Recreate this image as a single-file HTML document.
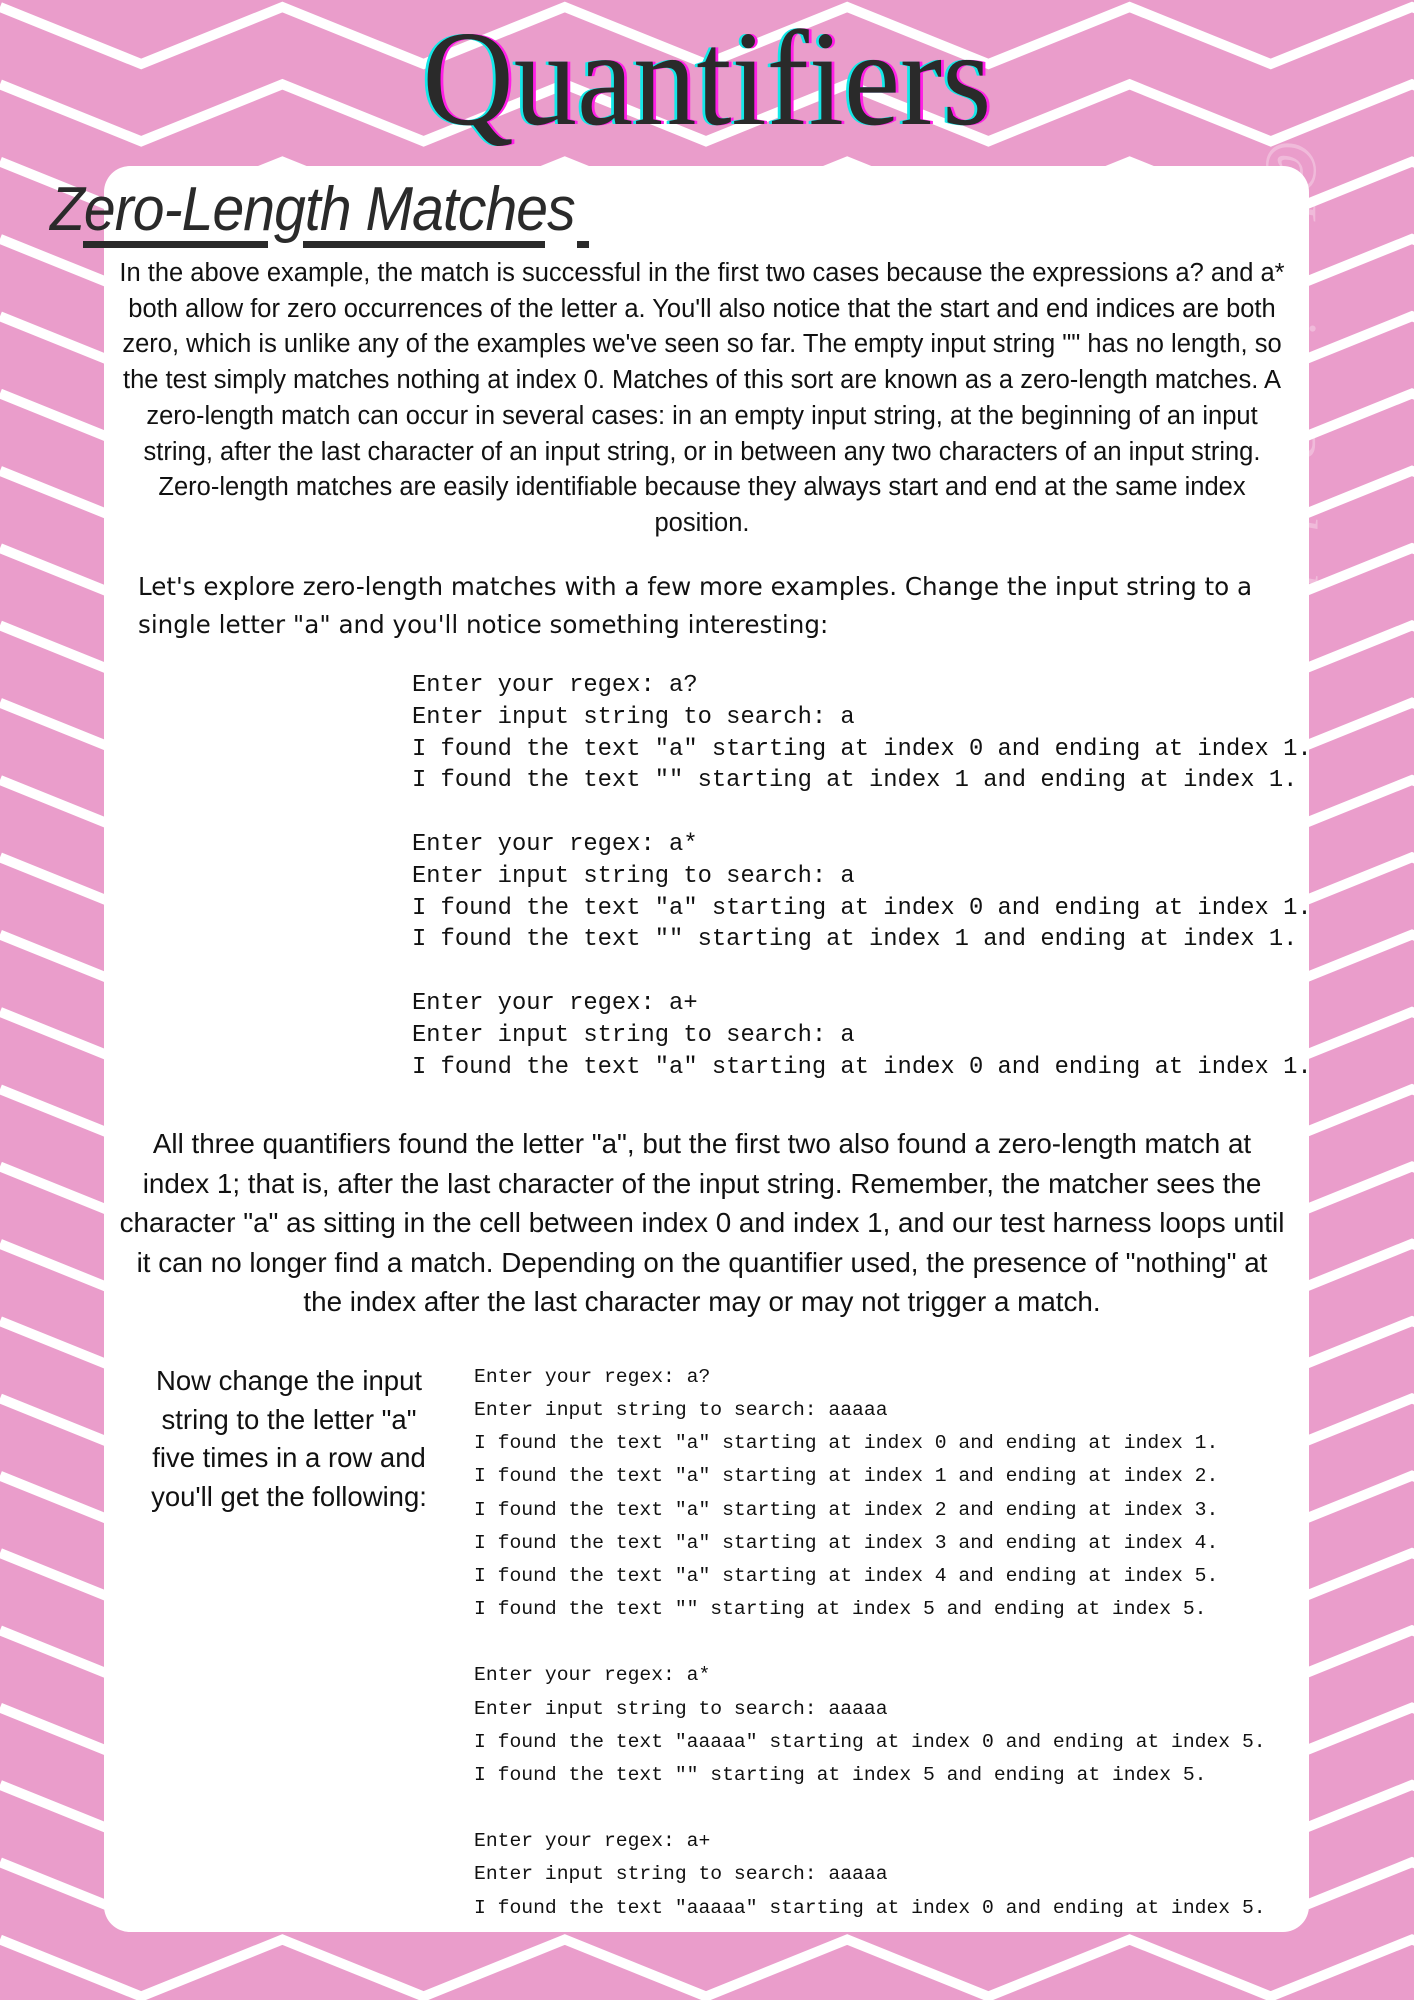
<!DOCTYPE html>
<html><head><meta charset="utf-8">
<style>
*{margin:0;padding:0;box-sizing:border-box}
html,body{width:1414px;height:2000px;overflow:hidden;background:#EA9DCB}
body{position:relative;font-family:"Liberation Sans",Arial,sans-serif;color:#111}
svg.bg{position:absolute;left:0;top:0}
.card{position:absolute;left:104px;top:166px;width:1205px;height:1766px;background:#fff;border-radius:26px}
.title{position:absolute;left:0;width:1414px;top:4px;text-align:center;font-family:"Liberation Serif",serif;font-size:136px;line-height:150px;color:#2a2a2a;text-shadow:-3px 0 #13e8e8,3px 0 #ff1fe6}
.title span{display:inline-block;transform:scaleX(0.93)}
.h2{position:absolute;left:50px;top:170px;font-family:"Liberation Sans",sans-serif;font-style:italic;font-size:62px;line-height:80px;color:#2a2a2a;transform-origin:left top;transform:scaleX(0.92);white-space:nowrap;letter-spacing:-1px}
.bar{position:absolute;background:#2a2a2a;height:7px;top:241px}
.p1{position:absolute;left:104px;width:1196px;top:256px;text-align:center;font-size:25.5px;line-height:35.7px;white-space:nowrap}
.p2{position:absolute;left:138px;top:568px;font-family:"DejaVu Sans",sans-serif;font-size:24.6px;line-height:38px;white-space:nowrap}
pre{position:absolute;font-family:"Liberation Mono",monospace;color:#111}
.m1{left:412px;top:670px;font-size:23.8px;line-height:31.8px}
.m2{left:474px;top:1361px;font-size:19.7px;line-height:33.15px}
.p3{position:absolute;left:104px;width:1196px;top:1124px;text-align:center;font-size:27.8px;line-height:39.5px;white-space:nowrap}
.p4{position:absolute;left:139px;width:300px;top:1362px;text-align:center;font-size:27.5px;line-height:38.6px;white-space:nowrap}
.wm{position:absolute;left:1330px;top:140px;transform-origin:left top;transform:rotate(90deg);font-family:"Liberation Serif",serif;font-style:italic;font-size:58px;color:rgba(255,255,255,0.3);white-space:nowrap;letter-spacing:6px}
</style></head><body>
<svg class="bg" width="1414" height="2000" viewBox="0 0 1414 2000" id="zz"></svg>
<div class="card"></div>
<div class="wm">@Lemisa Podolo</div>
<div class="title"><span>Quantifiers</span></div>
<div class="h2">Zero-Length Matches</div>
<div class="bar" style="left:83px;width:185px"></div>
<div class="bar" style="left:303px;width:242px"></div>
<div class="bar" style="left:577px;width:12px"></div>
<div class="p1">In the above example, the match is successful in the first two cases because the expressions a? and a*<br>both allow for zero occurrences of the letter a. You'll also notice that the start and end indices are both<br>zero, which is unlike any of the examples we've seen so far. The empty input string "" has no length, so<br>the test simply matches nothing at index 0. Matches of this sort are known as a zero-length matches. A<br>zero-length match can occur in several cases: in an empty input string, at the beginning of an input<br>string, after the last character of an input string, or in between any two characters of an input string.<br>Zero-length matches are easily identifiable because they always start and end at the same index<br>position.</div>
<div class="p2">Let's explore zero-length matches with a few more examples. Change the input string to a<br>single letter "a" and you'll notice something interesting:</div>
<pre class="m1">Enter your regex: a?
Enter input string to search: a
I found the text "a" starting at index 0 and ending at index 1.
I found the text "" starting at index 1 and ending at index 1.

Enter your regex: a*
Enter input string to search: a
I found the text "a" starting at index 0 and ending at index 1.
I found the text "" starting at index 1 and ending at index 1.

Enter your regex: a+
Enter input string to search: a
I found the text "a" starting at index 0 and ending at index 1.</pre>
<div class="p3">All three quantifiers found the letter "a", but the first two also found a zero-length match at<br>index 1; that is, after the last character of the input string. Remember, the matcher sees the<br>character "a" as sitting in the cell between index 0 and index 1, and our test harness loops until<br>it can no longer find a match. Depending on the quantifier used, the presence of "nothing" at<br>the index after the last character may or may not trigger a match.</div>
<div class="p4">Now change the input<br>string to the letter "a"<br>five times in a row and<br>you'll get the following:</div>
<pre class="m2">Enter your regex: a?
Enter input string to search: aaaaa
I found the text "a" starting at index 0 and ending at index 1.
I found the text "a" starting at index 1 and ending at index 2.
I found the text "a" starting at index 2 and ending at index 3.
I found the text "a" starting at index 3 and ending at index 4.
I found the text "a" starting at index 4 and ending at index 5.
I found the text "" starting at index 5 and ending at index 5.

Enter your regex: a*
Enter input string to search: aaaaa
I found the text "aaaaa" starting at index 0 and ending at index 5.
I found the text "" starting at index 5 and ending at index 5.

Enter your regex: a+
Enter input string to search: aaaaa
I found the text "aaaaa" starting at index 0 and ending at index 5.</pre>
<script>
(function(){
var s=document.getElementById('zz'),h='<g fill="none" stroke="#fff" stroke-width="10">';
for(var k=-1;k<28;k++){var y=7+77.3*k,p=[];
for(var i=0;i<=11;i++){p.push((i*141.2)+','+(i%2?y+57:y).toFixed(1));}
h+='<polyline points="'+p.join(' ')+'"/>';}
s.innerHTML=h+'</g>';})();
</script>
</body></html>
